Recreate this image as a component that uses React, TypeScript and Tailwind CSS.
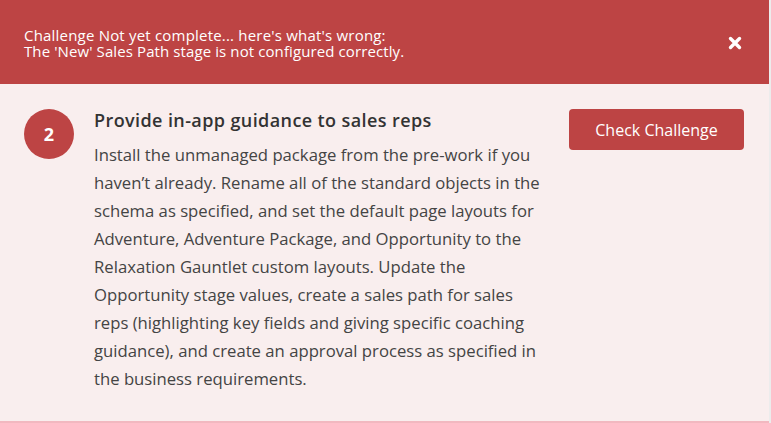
import { useState } from 'react';

const lines = [
  'Install the unmanaged package from the pre-work if you',
  'haven’t already. Rename all of the standard objects in the',
  'schema as specified, and set the default page layouts for',
  'Adventure, Adventure Package, and Opportunity to the',
  'Relaxation Gauntlet custom layouts. Update the',
  'Opportunity stage values, create a sales path for sales',
  'reps (highlighting key fields and giving specific coaching',
  'guidance), and create an approval process as specified in',
  'the business requirements.',
];

export default function App() {
  const [open, setOpen] = useState(true);

  return (
    <div className="flex h-[423px] w-[771px] bg-[#ececec] font-['Open_Sans',sans-serif]">
      <div className="flex w-[769px] flex-col border-b-2 border-[#f2b8c0] bg-[#f9eeee]">
        {open && (
          <div className="flex h-[84px] shrink-0 items-center justify-between bg-[#bd4444] pl-6 pr-[22px] pt-[1px] text-[15px] leading-[16px] text-white">
            <div>
              <p className="tracking-[0.2px]">Challenge Not yet complete... here's what's wrong:</p>
              <p className="tracking-[0.1px]">The 'New' Sales Path stage is not configured correctly.</p>
            </div>
            <button onClick={() => setOpen(false)} className="mt-[1px] flex h-6 w-6 items-center justify-center">
              <svg viewBox="0 0 14 14" className="h-[14px] w-[14px]">
                <path d="M2.5 2.5 L11.5 11.5 M11.5 2.5 L2.5 11.5" stroke="white" strokeWidth="3.4" strokeLinecap="round" />
              </svg>
            </button>
          </div>
        )}
        <div className="flex flex-1 pl-6 pr-[25px] pt-[25px]">
          <div className="flex h-[50px] w-[50px] shrink-0 items-center justify-center rounded-full bg-[#bd4444] text-[18px] font-bold text-white">
            2
          </div>
          <div className="ml-5">
            <h2 className="whitespace-nowrap text-[18px] font-semibold leading-[22px] tracking-[0.4px] text-[#333]">
              Provide in-app guidance to sales reps
            </h2>
            <p className="mt-[10px] whitespace-nowrap text-[16.7px] leading-[28px] text-[#444]">
              {lines.map((l) => (
                <span key={l} className="block">{l}</span>
              ))}
            </p>
          </div>
          <div className="ml-auto">
            <button className="h-[41px] w-[175px] rounded-[4px] bg-[#bd4444] text-[16px] text-white">
              Check Challenge
            </button>
          </div>
        </div>
      </div>
    </div>
  );
}
